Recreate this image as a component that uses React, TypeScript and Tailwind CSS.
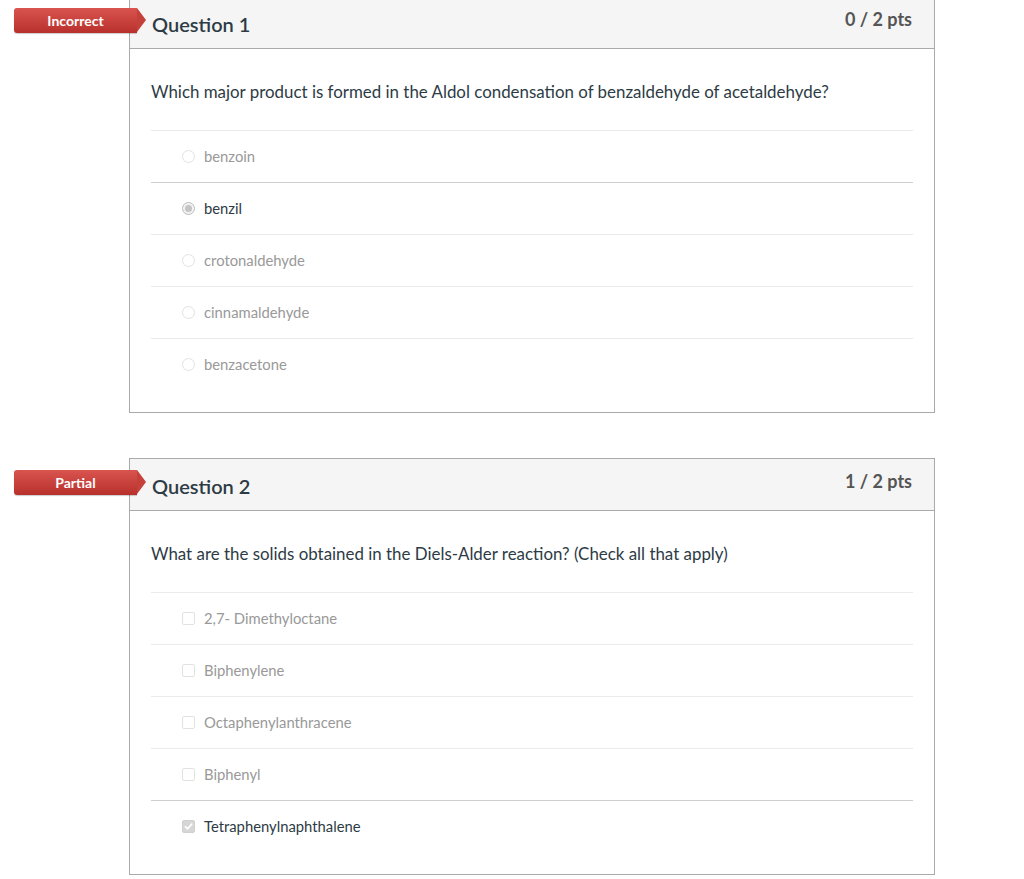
import React from "react";

type Option = { label: string; selected?: boolean };

const Q1: Option[] = [
  { label: "benzoin" },
  { label: "benzil", selected: true },
  { label: "crotonaldehyde" },
  { label: "cinnamaldehyde" },
  { label: "benzacetone" },
];

const Q2: Option[] = [
  { label: "2,7- Dimethyloctane" },
  { label: "Biphenylene" },
  { label: "Octaphenylanthracene" },
  { label: "Biphenyl" },
  { label: "Tetraphenylnaphthalene", selected: true },
];

function Badge({ text }: { text: string }) {
  return (
    <div className="absolute left-[-116px] top-[11px] flex h-[25px] items-stretch">
      <div className="flex w-[123px] items-center justify-center rounded-l-[3px] bg-gradient-to-b from-[#d9534f] to-[#b8302c] text-[14px] font-bold text-white shadow-[0_1px_1px_rgba(0,0,0,0.2)]">
        {text}
      </div>
      <div className="h-0 w-0 border-y-[12.5px] border-l-[9px] border-y-transparent border-l-[#c53f3b]" />
    </div>
  );
}

function Radio({ checked }: { checked?: boolean }) {
  return (
    <span
      className={`flex h-[13px] w-[13px] items-center justify-center rounded-full border ${
        checked ? "border-[#bdbdbd] bg-[#f2f2f2]" : "border-[#e2e2e2] bg-white"
      }`}
    >
      {checked && <span className="h-[7px] w-[7px] rounded-full bg-[#c4c4c4]" />}
    </span>
  );
}

function Check({ checked }: { checked?: boolean }) {
  return (
    <span
      className={`flex h-[13px] w-[13px] items-center justify-center rounded-[2px] border ${
        checked ? "border-[#d0d0d0] bg-[#d6d6d6]" : "border-[#e2e2e2] bg-white"
      }`}
    >
      {checked && (
        <svg width="9" height="9" viewBox="0 0 10 10" fill="none">
          <path d="M1.5 5.2 4 7.6 8.6 2.4" stroke="#fff" strokeWidth="1.8" strokeLinecap="round" strokeLinejoin="round" />
        </svg>
      )}
    </span>
  );
}

function Question({
  badge,
  title,
  pts,
  text,
  options,
  multi,
  className = "",
}: {
  badge: string;
  title: string;
  pts: string;
  text: string;
  options: Option[];
  multi?: boolean;
  className?: string;
}) {
  return (
    <div className={`relative border border-[#aaaaaa] bg-white ${className}`}>
      <Badge text={badge} />
      <div className="flex h-[52px] justify-between border-b border-[#aaaaaa] bg-[#f5f5f5] px-[22px]">
        <div className="pt-[12px] text-[20px] font-semibold text-[#2d3b45]">{title}</div>
        <div className="pt-[9px] text-[18px] font-bold text-[#555]">{pts}</div>
      </div>
      <div className="px-[21px] pb-[22px] pt-[31px]">
        <div className="pb-[26px] text-[16.9px] leading-[24px] text-[#2d3b45]">{text}</div>
        <div>
          {options.map((o, i) => (
            <div
              key={i}
              className={`flex h-[52px] items-center gap-[9px] border-t pl-[31px] text-[14.8px] ${
                o.selected ? "border-[#cfcfcf] text-[#2d3b45]" : "border-[#ebebeb] text-[#999]"
              }`}
            >
              {multi ? <Check checked={o.selected} /> : <Radio checked={o.selected} />}
              <span>{o.label}</span>
            </div>
          ))}
        </div>
      </div>
    </div>
  );
}

export default function App() {
  return (
    <div className="min-h-screen overflow-hidden bg-white font-['Lato','Liberation_Sans',sans-serif]">
      <div className="ml-[129px] w-[806px]">
        <Question
          className="mt-[-4px]"
          badge="Incorrect"
          title="Question 1"
          pts="0 / 2 pts"
          text="Which major product is formed in the Aldol condensation of benzaldehyde of acetaldehyde?"
          options={Q1}
        />
        <Question
          className="mt-[45px]"
          badge="Partial"
          title="Question 2"
          pts="1 / 2 pts"
          text="What are the solids obtained in the Diels-Alder reaction? (Check all that apply)"
          options={Q2}
          multi
        />
      </div>
    </div>
  );
}
